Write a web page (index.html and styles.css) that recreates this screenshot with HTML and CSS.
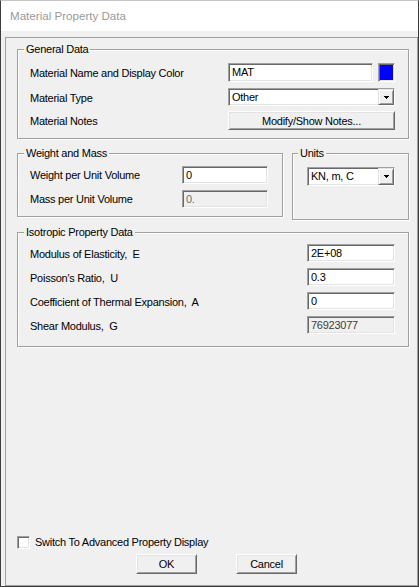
FILE: index.html
```html
<!DOCTYPE html>
<html>
<head>
<meta charset="utf-8">
<title>Material Property Data</title>
<link rel="stylesheet" href="styles.css">
</head>
<body>
<div class="window">
  <div class="titlebar">Material Property Data</div>
  <div class="client">
    <div class="frame">
      <section class="group general">
        <div class="legend">General Data</div>
        <div class="rows">
          <div class="row gr1">
            <span class="label">Material Name and Display Color</span>
            <div class="ctl ctl-general name-ctl">
              <div class="edit name-edit">MAT</div>
              <div class="swatch"></div>
            </div>
          </div>
          <div class="row gr2">
            <span class="label">Material Type</span>
            <div class="combo ctl-general">
              <span class="combo-text">Other</span>
              <span class="drop-btn"><svg width="5" height="3" viewBox="0 0 5 3" shape-rendering="crispEdges"><rect x="0" y="0" width="5" height="1" fill="#000"/><rect x="1" y="1" width="3" height="1" fill="#000"/><rect x="2" y="2" width="1" height="1" fill="#000"/></svg></span>
            </div>
          </div>
          <div class="row gr3">
            <span class="label">Material Notes</span>
            <div class="button ctl-general">Modify/Show Notes...</div>
          </div>
        </div>
      </section>

      <div class="pair">
        <section class="group weight">
          <div class="legend">Weight and Mass</div>
          <div class="rows">
            <div class="row sr">
              <span class="label">Weight per Unit Volume</span>
              <div class="edit ctl-weight">0</div>
            </div>
            <div class="row sr">
              <span class="label">Mass per Unit Volume</span>
              <div class="edit ctl-weight disabled">0.</div>
            </div>
          </div>
        </section>
        <section class="group units">
          <div class="legend legend-units">Units</div>
          <div class="combo units-combo">
            <span class="combo-text">KN, m, C</span>
            <span class="drop-btn"><svg width="5" height="3" viewBox="0 0 5 3" shape-rendering="crispEdges"><rect x="0" y="0" width="5" height="1" fill="#000"/><rect x="1" y="1" width="3" height="1" fill="#000"/><rect x="2" y="2" width="1" height="1" fill="#000"/></svg></span>
          </div>
        </section>
      </div>

      <section class="group iso">
        <div class="legend">Isotropic Property Data</div>
        <div class="rows">
          <div class="row sr">
            <span class="label">Modulus of Elasticity,&nbsp; E</span>
            <div class="edit ctl-iso">2E+08</div>
          </div>
          <div class="row sr">
            <span class="label">Poisson's Ratio,&nbsp; U</span>
            <div class="edit ctl-iso">0.3</div>
          </div>
          <div class="row sr">
            <span class="label">Coefficient of Thermal Expansion,&nbsp; A</span>
            <div class="edit ctl-iso">0</div>
          </div>
          <div class="row sr">
            <span class="label">Shear Modulus,&nbsp; G</span>
            <div class="edit ctl-iso readonly">76923077</div>
          </div>
        </div>
      </section>

      <div class="footer">
        <div class="check-row">
          <span class="checkbox"></span>
          <span class="label">Switch To Advanced Property Display</span>
        </div>
        <div class="buttons">
          <div class="button dlg-btn">OK</div>
          <div class="button dlg-btn">Cancel</div>
        </div>
      </div>
    </div>
  </div>
</div>
</body>
</html>
```

FILE: styles.css
```css
* { box-sizing: border-box; }

body {
  margin: 0;
  background: #f0f0f0;
  font-family: "Liberation Sans", Arial, sans-serif;
  font-size: 11px;
  letter-spacing: -0.25px;
  color: #000;
}

.window {
  width: 419px;
  height: 587px;
  border: 1px solid #3c3c3c;
  border-top-color: #c4c4c4;
  display: flex;
  flex-direction: column;
  background: #fff;
}

.titlebar {
  height: 30px;
  line-height: 30px;
  padding-left: 9px;
  font-family: "Liberation Sans", Arial, sans-serif;
  font-size: 11.6px;
  letter-spacing: 0;
  color: #9a9a9a;
  background: #fff;
}

.client {
  flex: 1;
  display: flex;
  background: #f0f0f0;
  padding: 6px 0 0 4px;
}

.frame {
  flex: 1;
  display: flex;
  flex-direction: column;
  border: 1px solid #a0a0a0;
  padding: 11px 8px 11px 11px;
}

.group {
  border: 1px solid #a0a0a0;
  box-shadow: 1px 1px 0 #fff, inset 1px 1px 0 #fff;
}

.legend {
  margin: -7px 0 0 -6px;
  padding: 0 2px;
  height: 13px;
  line-height: 13px;
  width: max-content;
  background: #f0f0f0;
}

.legend-units { margin-left: -9px; }

.rows {
  display: flex;
  flex-direction: column;
}

.row {
  display: flex;
  align-items: center;
  justify-content: space-between;
}

.label {
  white-space: nowrap;
  line-height: 13px;
}

/* General Data */
.general { padding: 0 13px 8px 12px; }
.general .rows { margin-top: 7px; }
.gr1 { height: 19px; }
.gr2 { height: 18px; margin-top: 6px; }
.gr3 { height: 19px; margin-top: 5px; }
.general .label { margin-top: 2px; }

.ctl-general { width: 167px; }

.name-ctl {
  display: flex;
  justify-content: space-between;
  height: 19px;
}

.edit {
  height: 18px;
  line-height: 16px;
  padding-left: 3px;
  background: #fff;
  border: 1px solid;
  border-color: #a0a0a0 #fff #fff #a0a0a0;
  box-shadow: inset 1px 1px 0 #696969, inset -1px -1px 0 #e3e3e3;
  white-space: nowrap;
  overflow: hidden;
}

.name-edit {
  width: 145px;
  height: 19px;
  line-height: 17px;
}

.swatch {
  width: 17px;
  height: 19px;
  background: #0000ff;
  border: 1px solid;
  border-color: #a0a0a0 #fff #fff #a0a0a0;
  box-shadow: inset 1px 1px 0 #696969, inset -1px -1px 0 #e3e3e3;
}

.edit.disabled {
  background: #f0f0f0;
  color: #6d6d6d;
}

.edit.readonly {
  background: #f0f0f0;
  color: #3c3c3c;
}

.combo {
  display: flex;
  align-items: stretch;
  height: 18px;
  background: #fff;
  border: 1px solid;
  border-color: #a0a0a0 #fff #fff #a0a0a0;
  box-shadow: inset 1px 1px 0 #696969, inset -1px -1px 0 #e3e3e3;
}

.combo-text {
  flex: 1;
  padding-left: 3px;
  line-height: 16px;
  white-space: nowrap;
}

.drop-btn {
  width: 16px;
  display: flex;
  align-items: center;
  justify-content: center;
  background: #f0f0f0;
  border: 1px solid;
  border-color: #e3e3e3 #696969 #696969 #e3e3e3;
  box-shadow: inset 1px 1px 0 #fff, inset -1px -1px 0 #a0a0a0;
}

.button {
  height: 19px;
  display: flex;
  align-items: center;
  justify-content: center;
  background: #f0f0f0;
  border: 1px solid;
  border-color: #fff #696969 #696969 #fff;
  box-shadow: inset 1px 1px 0 #e3e3e3, inset -1px -1px 0 #a0a0a0;
  white-space: nowrap;
}

/* Weight and Mass / Units */
.pair {
  display: flex;
  align-items: flex-start;
  gap: 9px;
  margin-top: 14px;
}

.weight {
  width: 266px;
  padding: 0 14px 8px 12px;
}
.weight .rows { margin-top: 6px; }

.sr { height: 18px; }
.sr + .sr { margin-top: 6px; }

.ctl-weight { width: 86px; }

.units {
  width: 117px;
  padding: 0 13px 33px 14px;
}

.units-combo {
  margin-top: 7px;
  height: 19px;
}
.units-combo .combo-text { line-height: 17px; }

/* Isotropic */
.iso {
  margin-top: 12px;
  padding: 0 13px 12px 12px;
}
.iso .rows { margin-top: 5px; }
.iso .label { margin-top: 3px; }
.ctl-iso { width: 88px; }

/* Footer */
.footer { margin-top: auto; }

.check-row {
  display: flex;
  align-items: center;
  gap: 5px;
  height: 13px;
}

.checkbox {
  width: 13px;
  height: 13px;
  background: #fff;
  border: 1px solid;
  border-color: #a0a0a0 #fff #fff #a0a0a0;
  box-shadow: inset 1px 1px 0 #696969, inset -1px -1px 0 #e3e3e3;
}

.buttons {
  display: flex;
  gap: 39px;
  margin-top: 5px;
  padding-left: 119px;
}

.dlg-btn {
  width: 61px;
  height: 20px;
}
```
